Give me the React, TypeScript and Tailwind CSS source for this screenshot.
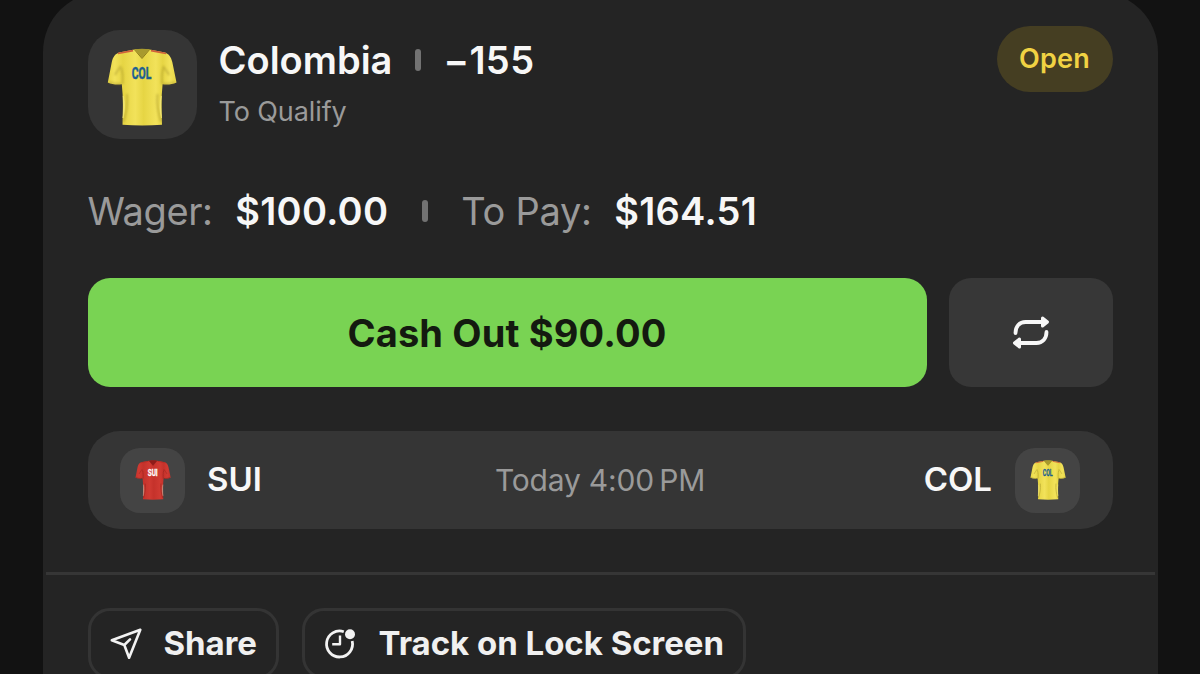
import { clsx } from "clsx"
import type { ReactNode } from "react"

type Kit = {
  code: string
  base: string
  light: string
  shade: string
  collar: string
  stripe: string
  side: string
  text: string
}

const colombia: Kit = {
  code: "COL",
  base: "#e6d544",
  light: "#f2e25a",
  shade: "#8d7c1c",
  collar: "#a89a2e",
  stripe: "#d0603a",
  side: "#f2e676",
  text: "#1b5f92",
}

const switzerland: Kit = {
  code: "SUI",
  base: "#c5322b",
  light: "#d03a32",
  shade: "#7d1a17",
  collar: "#8f1c19",
  stripe: "#b92a24",
  side: "#c4ab98",
  text: "#ffffff",
}

function Jersey({ kit, name, className }: { kit: Kit; name: string; className: string }) {
  const fabric = `${name}-fabric`
  const fold = `${name}-fold`

  return (
    <svg viewBox="0 0 70 78" className={className}>
      <defs>
        <linearGradient id={fabric} x1="0" x2="1" y1="0" y2="0">
          <stop offset="0" stopColor={kit.base} />
          <stop offset="0.1" stopColor={kit.light} />
          <stop offset="0.22" stopColor={kit.base} />
          <stop offset="0.4" stopColor={kit.light} />
          <stop offset="0.52" stopColor={kit.base} />
          <stop offset="0.7" stopColor={kit.light} />
          <stop offset="0.8" stopColor={kit.base} />
          <stop offset="0.9" stopColor={kit.light} />
          <stop offset="1" stopColor={kit.base} />
        </linearGradient>
        <filter id={fold} x="-20%" y="-20%" width="140%" height="140%">
          <feGaussianBlur stdDeviation="0.9" />
        </filter>
      </defs>
      <path
        d="M27.500 1.500 12 4.500C8 6 6 9 4.800 14L.8 34.500C5 36.500 10 37 14.800 36.300c1.500 13.500 1.200 27 .7 40.400 13 .9 26.500.9 39.500 0-.5-13.400-.9-27 .6-40.400 4.800.7 9.500.2 13.900-1.800L65.300 14C64 9 62 6 58 4.500L42.500 1.500Z"
        fill={`url(#${fabric})`}
      />
      <g fill="none" stroke={kit.shade} strokeWidth="1.800" opacity="0.4" filter={`url(#${fold})`}>
        <path d="M15.500 36c.5-6 .5-10-1-16M55 36c-.5-6-.5-10 1-16" />
        <path d="M2 34c4 1.800 8 2.300 12 2M68 34c-4 1.800-8 2.300-12 2" />
        <path d="M20 46c1 10-1 20-3.500 28M50.500 46c-1 10 1 20 3.500 28" />
        <path d="M8 27c2-4 4-6 6-9M62 27c-2-4-4-6-6-9" />
      </g>
      <path d="M16.300 48c.6 8 .2 16-.3 22 2-8 2-15 .3-22ZM54.200 48c-.6 8-.2 16 .3 22-2-8-2-15-.3-22Z" fill={kit.side} stroke={kit.side} strokeWidth="0.600" />
      <path d="M26 2.600 11 5.500M44 2.600l15 2.900" stroke={kit.stripe} strokeWidth="1.700" />
      <path d="M27.500 1.300C32 .5 38 .5 42.500 1.300L35 10Z" fill={kit.collar} />
      <path d="m27.300 1.500 7.700 9 7.700-9" fill="none" stroke={kit.shade} strokeWidth="1" />
      <text
        x="34.500"
        y="30.500"
        textAnchor="middle"
        textLength="19.500"
        lengthAdjust="spacingAndGlyphs"
        fill={kit.text}
        stroke={kit.text}
        strokeWidth="0.500"
        className="font-['Roboto',sans-serif] text-[16px] font-bold"
      >
        {kit.code}
      </text>
    </svg>
  )
}

function RepeatIcon() {
  return (
    <svg viewBox="0 0 38 36" className="h-9 w-[38px]" fill="none" stroke="#f7f7f7" strokeLinecap="round" strokeLinejoin="round">
      <path d="M3.500 18c0-6.500 4-11 10-11H30" strokeWidth="3.800" />
      <path d="m30.500 3 5 4-5 4Z" fill="#f7f7f7" strokeWidth="3" />
      <path d="M34.500 17c0 6.500-4 11-10 11H8" strokeWidth="3.800" />
      <path d="m7.500 24-5 4 5 4Z" fill="#f7f7f7" strokeWidth="3" />
    </svg>
  )
}

function SendIcon() {
  return (
    <svg viewBox="0 0 32 32" className="size-8" fill="none" stroke="#f2f2f2" strokeWidth="2.600" strokeLinecap="round" strokeLinejoin="round">
      <path d="M30.300 1.700 1.800 12.200l12.500 4.800 4.800 12.700ZM14.300 17l5.700-5.600" />
    </svg>
  )
}

function ClockIcon() {
  return (
    <svg viewBox="0 0 32 32" className="size-8" fill="none" stroke="#f2f2f2" strokeWidth="2.800" strokeLinejoin="round">
      <path d="M19.800 3.700A13 13 0 1 0 28.200 13" />
      <path d="M16 7.500v8.800H8.200" strokeWidth="2.400" />
      <circle cx="26" cy="6.300" r="5" fill="#f2f2f2" stroke="none" />
    </svg>
  )
}

function Separator({ className }: { className?: string }) {
  return <span className={clsx("h-[22px] w-[6px] rounded-[3px] bg-[#727272]", className)} />
}

function ActionButton({ icon, className, children }: { icon: ReactNode; className: string; children: ReactNode }) {
  return (
    <button
      className={clsx(
        "flex h-[71px] shrink-0 items-center rounded-[22px] border-[3px] border-[#343434] pl-[19px] text-[33px] leading-none font-bold tracking-[-0.03px] whitespace-nowrap text-[#f0f0f0]",
        className
      )}
    >
      {icon}
      {children}
    </button>
  )
}

export default function App() {
  return (
    <div className="h-[674px] w-[1200px] overflow-hidden bg-[#121212] font-['Inter',sans-serif] text-[#f7f7f7]">
      <main className="-mt-2 ml-[42.5px] h-[760px] w-[1115px] rounded-[60px] bg-[#242424] pt-[38px]">
        <header className="mx-[45px] flex h-[109px] items-start">
          <div className="flex size-[109px] items-center justify-center rounded-[32px] bg-[#353535]">
            <Jersey kit={colombia} name="pick" className="mt-[5px] mr-px h-[78px] w-[70px]" />
          </div>
          <div className="ml-[22px] flex flex-col">
            <div className="flex h-[60px] items-center text-[38px] leading-none font-semibold">
              <h1>Colombia</h1>
              <Separator className="ml-[23px]" />
              <span className="ml-[22px] tracking-[0.4px]">−155</span>
            </div>
            <p className="mt-[6px] text-[27px] leading-8 tracking-[-0.1px] text-[#9a9a9a]">To Qualify</p>
          </div>
          <span className="-mt-1 ml-auto flex h-[66px] w-[116px] items-center justify-center rounded-full bg-[#453e22] text-[27px] font-semibold tracking-[0.2px] text-[#f0d243]">
            Open
          </span>
        </header>

        <section className="mx-[45px] mt-[48px] flex h-[48px] items-center text-[38px] leading-none font-semibold tracking-[0.3px] whitespace-nowrap">
          <span className="font-normal tracking-[-0.4px] text-[#9a9a9a]">Wager:</span>
          <span className="ml-[22.5px]">$100.00</span>
          <Separator className="ml-[34px]" />
          <span className="ml-[33px] font-normal tracking-[-0.3px] text-[#9a9a9a]">To Pay:</span>
          <span className="ml-[22.5px]">$164.51</span>
        </section>

        <div className="mx-[45px] mt-[43px] flex gap-[22px]">
          <button className="h-[109px] w-[839px] rounded-[22px] bg-[#79d353] pt-px text-[38px] font-bold tracking-[0.15px] text-[#141a10]">
            Cash Out $90.00
          </button>
          <button className="flex h-[109px] w-[164px] items-center justify-center rounded-[22px] bg-[#373737]">
            <RepeatIcon />
          </button>
        </div>

        <section className="mx-[45px] mt-[44px] flex h-[98px] items-center justify-between rounded-[32px] bg-[#353535] px-[32.5px] text-[33px] font-semibold">
          <div className="flex w-[230px] items-center gap-[22px]">
            <span className="flex size-[65px] items-center justify-center rounded-[20px] bg-[#444444]">
              <Jersey kit={switzerland} name="away" className="h-[40px] w-[36px]" />
            </span>
            SUI
          </div>
          <time className="text-[30px] font-normal tracking-[-0.2px] text-[#9a9a9a]">Today 4:00{"\u2009"}PM</time>
          <div className="flex w-[230px] items-center justify-end gap-[23px]">
            COL
            <span className="flex size-[65px] items-center justify-center rounded-[20px] bg-[#444444]">
              <Jersey kit={colombia} name="home" className="h-[40px] w-[36px]" />
            </span>
          </div>
        </section>

        <hr className="mx-[3px] mt-[43px] border-t-[3px] border-[#363636]" />

        <footer className="mx-[45px] mt-[33px] flex gap-[23px]">
          <ActionButton className="w-[191px] gap-[22px]" icon={<SendIcon />}>
            Share
          </ActionButton>
          <ActionButton className="w-[444px] gap-[23px]" icon={<ClockIcon />}>
            Track on Lock Screen
          </ActionButton>
        </footer>
      </main>
    </div>
  )
}
